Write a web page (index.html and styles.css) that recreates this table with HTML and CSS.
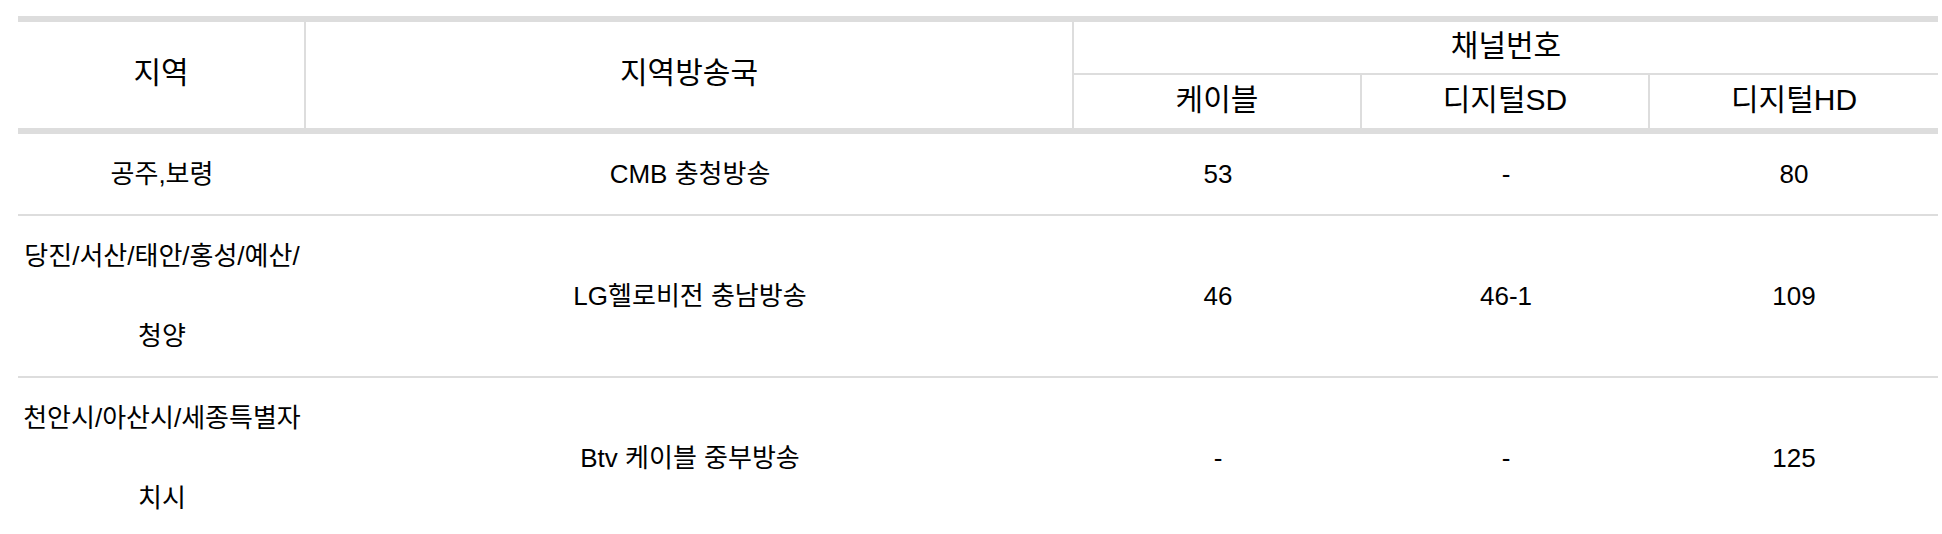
FILE: index.html
```html
<!DOCTYPE html>
<html lang="ko">
<head>
<meta charset="utf-8">
<title>지역방송 채널번호</title>
<link rel="stylesheet" href="styles.css">
</head>
<body>
<div class="wrap">
  <table class="channels">
    <colgroup>
      <col class="c-region">
      <col class="c-station">
      <col class="c-num">
      <col class="c-num">
      <col class="c-num">
    </colgroup>
    <thead>
      <tr>
        <th rowspan="2" class="h-span">지역</th>
        <th rowspan="2" class="h-span">지역방송국</th>
        <th colspan="3" class="h-group">채널번호</th>
      </tr>
      <tr>
        <th class="h-sub">케이블</th>
        <th class="h-sub">디지털SD</th>
        <th class="h-sub h-last">디지털HD</th>
      </tr>
    </thead>
    <tbody>
      <tr>
        <td>공주,보령</td>
        <td>CMB 충청방송</td>
        <td>53</td>
        <td>-</td>
        <td>80</td>
      </tr>
      <tr>
        <td>당진/서산/태안/홍성/예산/<br>청양</td>
        <td>LG헬로비전 충남방송</td>
        <td>46</td>
        <td>46-1</td>
        <td>109</td>
      </tr>
      <tr>
        <td>천안시/아산시/세종특별자<br>치시</td>
        <td>Btv 케이블 중부방송</td>
        <td>-</td>
        <td>-</td>
        <td>125</td>
      </tr>
    </tbody>
  </table>
</div>
</body>
</html>
```

FILE: styles.css
```css
html, body {
  margin: 0;
  padding: 0;
  background: #ffffff;
}

body {
  font-family: "Liberation Sans", "Noto Sans CJK KR", sans-serif;
  color: #000000;
}

.wrap {
  padding: 16px 4px 0 18px;
}

.channels {
  width: 1920px;
  table-layout: fixed;
  border-collapse: separate;
  border-spacing: 0;
  border-top: 6px solid #dddddd;
}

.c-region { width: 288px; }
.c-station { width: 768px; }
.c-num { width: 288px; }

.channels th {
  font-weight: normal;
  font-size: 30px;
  line-height: 36px;
  text-align: center;
  vertical-align: middle;
  padding: 0 0 4px;
}

.h-span {
  height: 102px;
  border-bottom: 6px solid #dddddd;
  border-right: 2px solid #dddddd;
}

.h-group {
  height: 47px;
  border-bottom: 2px solid #dddddd;
}

.h-sub {
  height: 49px;
  border-bottom: 6px solid #dddddd;
  border-right: 2px solid #dddddd;
}

.h-sub.h-last {
  border-right: 0;
}

.channels td {
  font-size: 26px;
  line-height: 80px;
  text-align: center;
  vertical-align: middle;
  padding: 0;
  border-bottom: 2px solid #dddddd;
  white-space: nowrap;
}
```
